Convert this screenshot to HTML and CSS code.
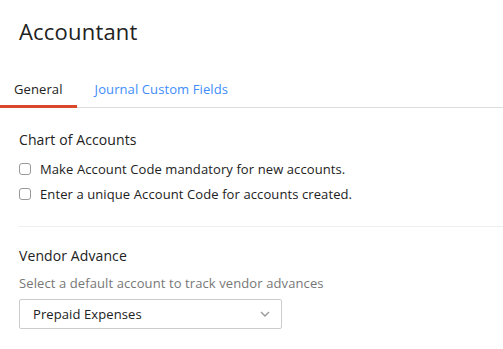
FILE: index.html
```html
<!DOCTYPE html>
<html lang="en">
<head>
    <meta charset="UTF-8">
    <meta name="viewport" content="width=device-width, initial-scale=1.0">
    <title>Accountant</title>
    <link rel="stylesheet" href="styles.css">
</head>
<body>

    <div class="page">
        <h1>Accountant</h1>

        <div class="tabs">
            <a class="tab active">General</a>
            <a class="tab">Journal Custom Fields</a>
        </div>

        <div class="section">
            <h2>Chart of Accounts</h2>
            <label class="check"><input type="checkbox"><span>Make Account Code mandatory for new accounts.</span></label>
            <label class="check"><input type="checkbox"><span>Enter a unique Account Code for accounts created.</span></label>
        </div>

        <div class="section last">
            <h2>Vendor Advance</h2>
            <p class="hint">Select a default account to track vendor advances</p>
            <div class="select">
                <span>Prepaid Expenses</span>
                <svg width="10" height="6" viewBox="0 0 10 6"><path d="M1 1l4 4 4-4" fill="none" stroke="#999" stroke-width="1.4"/></svg>
            </div>
        </div>
    </div>

</body>
</html>
```

FILE: styles.css
```css
body {
    margin: 0;
    font-family: "Open Sans", sans-serif;
    background-color: #fff;
    color: #222;
    letter-spacing: 0.1px;
}

h1 {
    font-size: 22px;
    font-weight: normal;
    margin: 0;
    padding: 17px 19px 0;
    line-height: 28px;
    letter-spacing: 0.2px;
}

.tabs {
    display: flex;
    margin-top: 35px;
    border-bottom: 1px solid #ddd;
}

.tab {
    padding: 0 14px 7px;
    font-size: 13px;
    color: #408dfb;
    line-height: 18px;
    border-bottom: 3px solid transparent;
    margin-bottom: -1px;
}

.tab.active {
    color: #222;
    border-bottom-color: #d9482b;
    margin-right: 4px;
}

.section {
    margin-left: 19px;
    padding: 22px 0 23px;
    border-bottom: 1px solid #eee;
}

.section.last {
    border-bottom: none;
    padding-top: 19px;
}

h2 {
    font-size: 14px;
    font-weight: normal;
    margin: 0 0 10px;
    line-height: 20px;
}

.section.last h2 {
    margin-bottom: 8px;
}

.check {
    display: flex;
    align-items: center;
    font-size: 13px;
    line-height: 18px;
    margin-top: 7px;
}

.check input {
    appearance: none;
    width: 12px;
    height: 12px;
    margin: 0 9px 0 0;
    border: 1px solid #999;
    border-radius: 3px;
    box-sizing: border-box;
}

.hint {
    font-size: 13px;
    color: #777;
    margin: 0 0 7px;
    line-height: 18px;
}

.select {
    width: 263px;
    height: 30px;
    box-sizing: border-box;
    border: 1px solid #ccc;
    border-radius: 2px;
    display: flex;
    align-items: center;
    justify-content: space-between;
    padding: 0 11px 0 13px;
    font-size: 13px;
}
```
